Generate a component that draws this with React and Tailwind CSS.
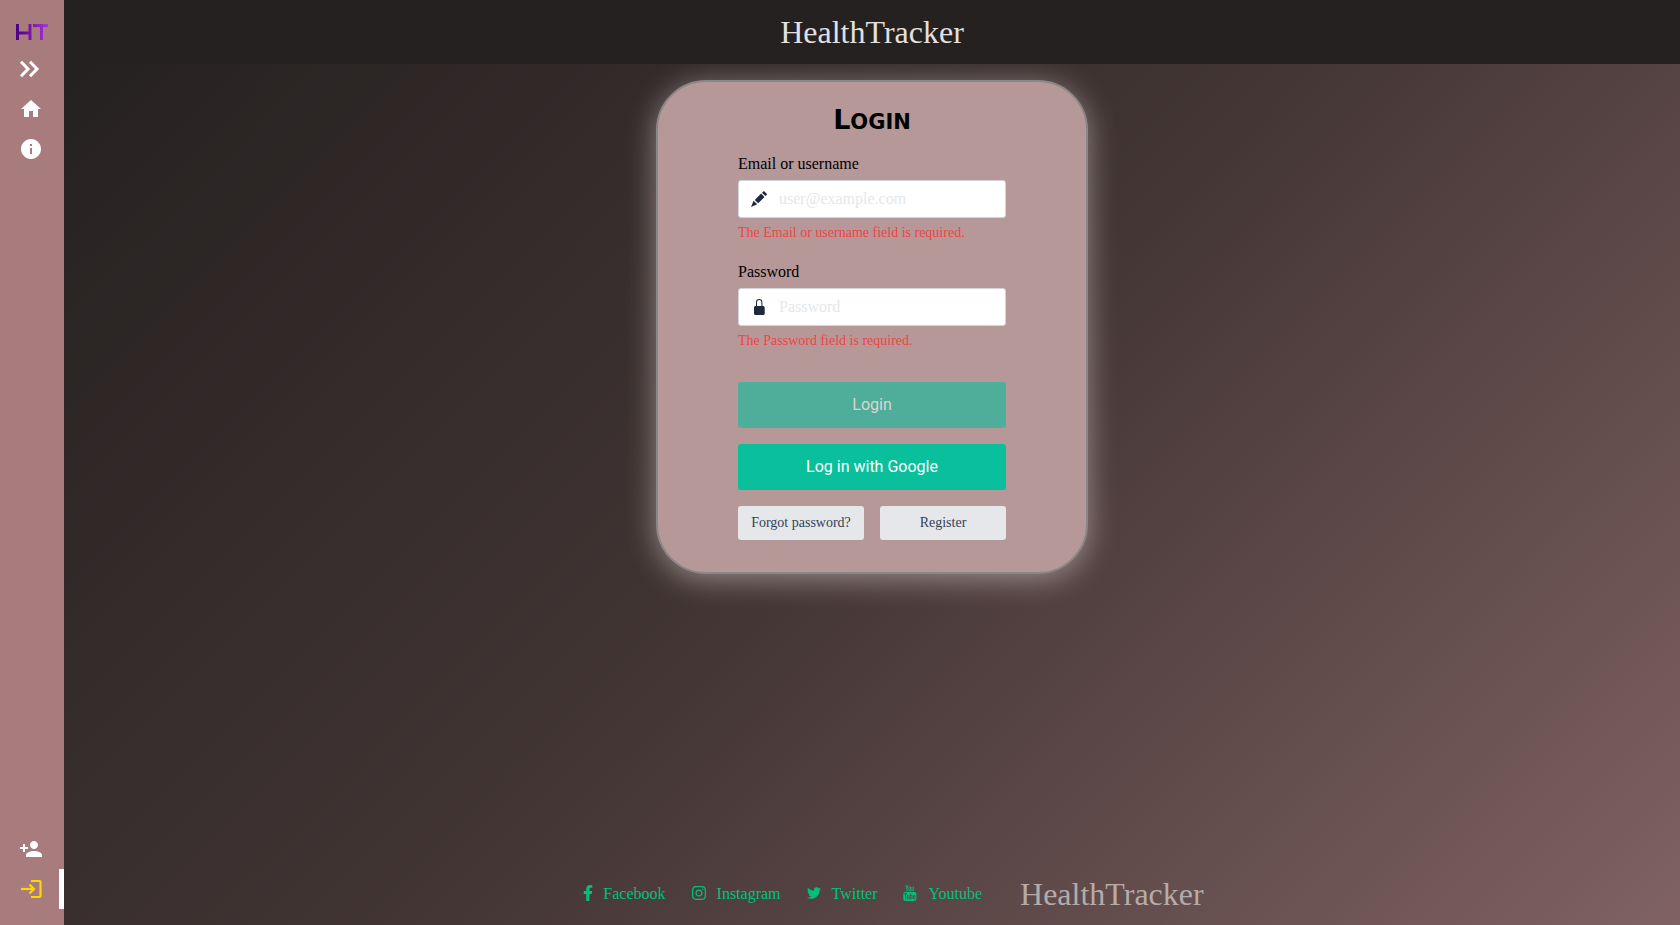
import { MdHome, MdInfo, MdPersonAddAlt1 } from "react-icons/md";
import { FaFacebookF, FaInstagram, FaTwitter } from "react-icons/fa";

function Logo() {
  return (
    <svg viewBox="0 0 32 16" className="h-4 w-8" fill="none" strokeWidth="3" aria-hidden="true">
      <defs>
        <linearGradient id="ht" gradientUnits="userSpaceOnUse" x1="0" y1="0" x2="32" y2="0">
          <stop offset="0" stopColor="#4b0082" />
          <stop offset="1" stopColor="#a832d8" />
        </linearGradient>
      </defs>
      <g stroke="url(#ht)">
        <path d="M1.5 0V16" />
        <path d="M14 0V16" />
        <path d="M3 9H13" />
        <path d="M17 1.6H32" />
        <path d="M25.5 0V16" />
      </g>
    </svg>
  );
}

function Chevrons() {
  return (
    <svg viewBox="0 0 24 24" className="size-6" fill="none" stroke="currentColor" strokeWidth="3" aria-hidden="true">
      <path d="M2 4.7 9 12 2 19.3" />
      <path d="M11 4.7 18 12 11 19.3" />
    </svg>
  );
}

function LoginIcon() {
  return (
    <svg viewBox="0 0 24 24" className="size-6" fill="none" stroke="currentColor" strokeWidth="2.2" aria-hidden="true">
      <path d="M12 4H20.5a1 1 0 0 1 1 1V19a1 1 0 0 1-1 1H12" />
      <path d="M2 12H15" />
      <path d="M10.5 7.5 15 12 10.5 16.5" />
    </svg>
  );
}

function Pencil() {
  return (
    <svg viewBox="0 0 16 16" className="size-4" fill="currentColor" aria-hidden="true">
      <path d="M12.9 0 16.2 3.2 14.4 5.1 11 1.8ZM10.1 2.6 13.5 5.9 7.2 12.2 3.8 8.9ZM2.6 9.7 6.3 13.3 0 16Z" />
    </svg>
  );
}

function Lock() {
  return (
    <svg viewBox="0 0 16 16" className="size-4" fill="currentColor" aria-hidden="true">
      <path d="M5 7V3.2a3.2 3.2 0 0 1 6.4 0V7h.8A1.5 1.5 0 0 1 13.7 8.5V14.5a1.5 1.5 0 0 1-1.5 1.5h-7.7A1.5 1.5 0 0 1 3 14.5v-6A1.5 1.5 0 0 1 4.5 7ZM6 7h4.4V3.2a2.2 2.2 0 0 0-4.4 0Z" />
    </svg>
  );
}

function Youtube() {
  return (
    <svg viewBox="0 0 1792 1792" className="size-4" fill="currentColor" aria-hidden="true">
      <path d="M971 1244v211q0 67-39 67-23 0-45-22v-301q22-22 45-22 39 0 39 67zm338 1v46h-90v-46q0-68 45-68t45 68zm-966-218h107v-94h-312v94h105v569h100v-569zm288 569h89v-494h-89v378q-30 42-57 42-18 0-21-21-1-3-1-35v-364h-89v391q0 49 8 73 12 37 58 37 48 0 102-61v54zm429-148v-197q0-73-9-99-17-56-71-56-50 0-93 54v-217h-89v663h89v-48q45 55 93 55 54 0 71-55 9-27 9-100zm338-10v-13h-91q0 51-2 61-7 36-40 36-46 0-46-69v-87h179v-103q0-79-27-116-39-51-106-51-68 0-107 51-28 37-28 116v173q0 79 29 116 39 51 108 51 72 0 108-53 18-27 21-54 2-9 2-58zm-608-913v-210q0-69-43-69t-43 69v210q0 70 43 70t43-70zm719 751q0 234-26 350-14 59-58 99t-102 46q-184 21-555 21t-555-21q-58-6-102.5-46t-57.5-99q-26-112-26-350 0-234 26-350 14-59 58-99t103-47q183-20 554-20t555 20q58 7 102.5 47t57.5 99q26 112 26 350zm-998-1276h102l-121 399v271h-100v-271q-14-74-61-212-37-103-65-187h106l71 263zm370 333v175q0 81-28 118-38 51-106 51-67 0-105-51-28-38-28-118v-175q0-80 28-117 38-51 105-51 68 0 106 51 28 37 28 117zm335-162v499h-91v-55q-53 62-103 62-46 0-59-37-8-24-8-75v-394h91v367q0 33 1 35 3 22 21 22 27 0 57-43v-381h91z" />
    </svg>
  );
}

function Sidebar() {
  return (
    <nav className="flex w-16 shrink-0 flex-col bg-[#a87c7c] pt-px text-2xl text-white">
      <a href="#" aria-label="HealthTracker" className="flex h-12 items-end justify-center pb-[9px]">
        <Logo />
      </a>
      <button type="button" aria-label="Expand menu" className="flex h-10 items-center pl-[19px]">
        <Chevrons />
      </button>
      <a href="#" aria-label="Home" className="flex h-10 items-center pl-[19px]">
        <MdHome />
      </a>
      <a href="#" aria-label="About" className="flex h-10 items-center pl-[19px]">
        <MdInfo />
      </a>
      <div className="mt-auto mb-4">
        <a href="#" aria-label="Register" className="flex h-10 items-center pl-[19px]">
          <MdPersonAddAlt1 className="-scale-x-100" />
        </a>
        <a href="#" aria-label="Login" className="flex h-10 items-center border-r-5 border-white pl-[19px] text-[#ffd700]">
          <LoginIcon />
        </a>
      </div>
    </nav>
  );
}

function Field({ id, label, type, placeholder, icon, error }) {
  return (
    <div className="mb-[17px]">
      <label htmlFor={id} className="mb-1 block text-base leading-6 text-black">
        {label}
      </label>
      <div className="flex h-[38px] items-center rounded-[3px] border border-[#ced4da] bg-white text-[#1e293b]">
        <span className="flex w-10 justify-center">{icon}</span>
        <input
          id={id}
          type={type}
          placeholder={placeholder}
          aria-describedby={id + "-error"}
          className="min-w-0 flex-1 bg-transparent text-base outline-none placeholder:text-[#e5e7eb]"
        />
      </div>
      <p id={id + "-error"} className="mt-[5px] text-sm leading-5 text-[#ef4444]">
        {error}
      </p>
    </div>
  );
}

const socials = [
  { name: "Facebook", icon: <FaFacebookF className="w-[10px]" /> },
  { name: "Instagram", icon: <FaInstagram /> },
  { name: "Twitter", icon: <FaTwitter className="w-4 text-sm" /> },
  { name: "Youtube", icon: <Youtube /> },
];

export default function App() {
  return (
    <div className="flex min-h-screen font-['Liberation_Serif',serif]">
      <Sidebar />
      <div className="flex min-w-0 flex-1 flex-col bg-linear-135 from-[#242020] via-[#423534] to-[#806262]">
        <header className="z-10 flex h-16 items-center justify-center bg-[#252120] text-[32px] text-[#e2e0e0]">
          HealthTracker
        </header>
        <main className="flex flex-1 flex-col items-center pt-4">
          <form className="w-[432px] rounded-[50px] border-2 border-[#8b8787] bg-[#b69898] px-20 pt-5 pb-8 shadow-[0_5px_30px_rgba(255,240,240,0.45)]">
            <h1 className="mb-4 h-[34px] text-center font-['DejaVu_Sans',sans-serif] text-[21px] leading-9 font-black text-black uppercase first-letter:text-[27px]">
              Login
            </h1>
            <Field id="email" label="Email or username" type="text" placeholder="user@example.com" icon={<Pencil />} error="The Email or username field is required." />
            <Field id="password" label="Password" type="password" placeholder="Password" icon={<Lock />} error="The Password field is required." />
            <div className="flex flex-col gap-4 pt-[14px]">
              <button type="submit" disabled className="h-[46px] rounded-[3px] bg-[#4eae9a] font-[Roboto,sans-serif] text-base text-[#dfd3d3]">
                Login
              </button>
              <button type="button" className="h-[46px] rounded-[3px] bg-[#09bf9c] font-[Roboto,sans-serif] text-base text-white">
                Log in with Google
              </button>
              <div className="grid grid-cols-2 gap-4 text-sm text-[#334155]">
                <button type="button" className="h-[34px] rounded-[3px] bg-[#e5e7eb]">Forgot password?</button>
                <button type="button" className="h-[34px] rounded-[3px] bg-[#e5e7eb]">Register</button>
              </div>
            </div>
          </form>
        </main>
        <footer className="flex h-[62px] items-center justify-center gap-[25px] pl-[43px]">
          {socials.map((s) => (
            <a key={s.name} href="#" className="flex items-center gap-[10px] text-base text-[#00c17c]">
              <span className="pb-[3px]">{s.icon}</span>
              {s.name}
            </a>
          ))}
          <span className="pl-[13px] text-[32px] text-[#b5abab]">HealthTracker</span>
        </footer>
      </div>
    </div>
  );
}
